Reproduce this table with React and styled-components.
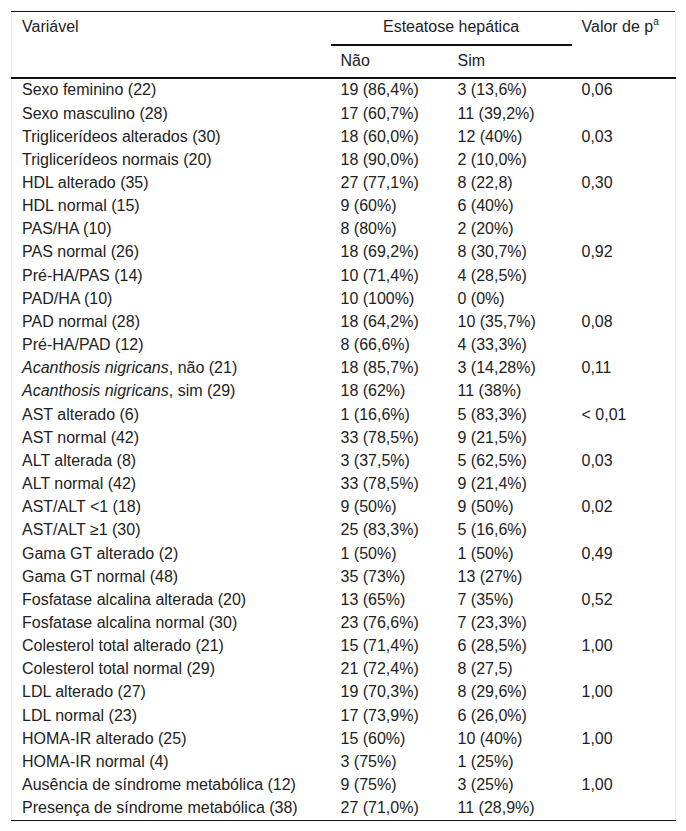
import React from 'react';
import styled, { createGlobalStyle } from 'styled-components';

const GlobalStyle = createGlobalStyle`
  body {
    margin: 0;
    background: #fff;
    font-family: "Liberation Sans", Arial, sans-serif;
    color: #222;
  }
`;

const Page = styled.div`
  padding: 11px 11px 0 11px;
`;

const Table = styled.table`
  width: 664px;
  table-layout: fixed;
  border-collapse: collapse;
  font-size: 16px;
  line-height: 18.4px;
  border-left: 1px solid #ececec;
  border-right: 1px solid #ececec;
  border-top: 1px solid #111;
  border-bottom: 1px solid #111;
`;

const Th = styled.th`
  font-weight: normal;
  text-align: ${p => (p.$center ? 'center' : 'left')};
  vertical-align: top;
  white-space: nowrap;
  padding: ${p => (p.$sub ? '6px 10px 6.6px' : '6px 10px 7.6px')};
  border-bottom: ${p => (p.$line ? '2px solid #111' : 'none')};
`;

const HeadRow = styled.tr`
  border-bottom: ${p => (p.$last ? '2px solid #111' : 'none')};
`;

const Td = styled.td`
  padding: 2.38px 10px;
  text-align: left;
  vertical-align: top;
  white-space: nowrap;
`;

const Sup = styled.sup`
  font-size: 10px;
  line-height: 0;
  vertical-align: 7px;
`;

const rows = [
  ['Sexo feminino (22)', '19 (86,4%)', '3 (13,6%)', '0,06'],
  ['Sexo masculino (28)', '17 (60,7%)', '11 (39,2%)', ''],
  ['Triglicerídeos alterados (30)', '18 (60,0%)', '12 (40%)', '0,03'],
  ['Triglicerídeos normais (20)', '18 (90,0%)', '2 (10,0%)', ''],
  ['HDL alterado (35)', '27 (77,1%)', '8 (22,8)', '0,30'],
  ['HDL normal (15)', '9 (60%)', '6 (40%)', ''],
  ['PAS/HA (10)', '8 (80%)', '2 (20%)', ''],
  ['PAS normal (26)', '18 (69,2%)', '8 (30,7%)', '0,92'],
  ['Pré-HA/PAS (14)', '10 (71,4%)', '4 (28,5%)', ''],
  ['PAD/HA (10)', '10 (100%)', '0 (0%)', ''],
  ['PAD normal (28)', '18 (64,2%)', '10 (35,7%)', '0,08'],
  ['Pré-HA/PAD (12)', '8 (66,6%)', '4 (33,3%)', ''],
  [<><i>Acanthosis nigricans</i>, não (21)</>, '18 (85,7%)', '3 (14,28%)', '0,11'],
  [<><i>Acanthosis nigricans</i>, sim (29)</>, '18 (62%)', '11 (38%)', ''],
  ['AST alterado (6)', '1 (16,6%)', '5 (83,3%)', '< 0,01'],
  ['AST normal (42)', '33 (78,5%)', '9 (21,5%)', ''],
  ['ALT alterada (8)', '3 (37,5%)', '5 (62,5%)', '0,03'],
  ['ALT normal (42)', '33 (78,5%)', '9 (21,4%)', ''],
  ['AST/ALT <1 (18)', '9 (50%)', '9 (50%)', '0,02'],
  ['AST/ALT ≥1 (30)', '25 (83,3%)', '5 (16,6%)', ''],
  ['Gama GT alterado (2)', '1 (50%)', '1 (50%)', '0,49'],
  ['Gama GT normal (48)', '35 (73%)', '13 (27%)', ''],
  ['Fosfatase alcalina alterada (20)', '13 (65%)', '7 (35%)', '0,52'],
  ['Fosfatase alcalina normal (30)', '23 (76,6%)', '7 (23,3%)', ''],
  ['Colesterol total alterado (21)', '15 (71,4%)', '6 (28,5%)', '1,00'],
  ['Colesterol total normal (29)', '21 (72,4%)', '8 (27,5)', ''],
  ['LDL alterado (27)', '19 (70,3%)', '8 (29,6%)', '1,00'],
  ['LDL normal (23)', '17 (73,9%)', '6 (26,0%)', ''],
  ['HOMA-IR alterado (25)', '15 (60%)', '10 (40%)', '1,00'],
  ['HOMA-IR normal (4)', '3 (75%)', '1 (25%)', ''],
  ['Ausência de síndrome metabólica (12)', '9 (75%)', '3 (25%)', '1,00'],
  ['Presença de síndrome metabólica (38)', '27 (71,0%)', '11 (28,9%)', ''],
];

export default function App() {
  return (
    <Page>
      <GlobalStyle />
      <Table>
        <colgroup>
          <col style={{ width: 319 }} />
          <col style={{ width: 117 }} />
          <col style={{ width: 124 }} />
          <col style={{ width: 104 }} />
        </colgroup>
        <thead>
          <HeadRow>
            <Th rowSpan={2}>Variável</Th>
            <Th colSpan={2} $center $line>Esteatose hepática</Th>
            <Th rowSpan={2}>Valor de p<Sup>a</Sup></Th>
          </HeadRow>
          <HeadRow $last>
            <Th $sub>Não</Th>
            <Th $sub>Sim</Th>
          </HeadRow>
        </thead>
        <tbody>
          {rows.map((r, i) => (
            <tr key={i}>
              <Td>{r[0]}</Td>
              <Td>{r[1]}</Td>
              <Td>{r[2]}</Td>
              <Td>{r[3]}</Td>
            </tr>
          ))}
        </tbody>
      </Table>
    </Page>
  );
}
